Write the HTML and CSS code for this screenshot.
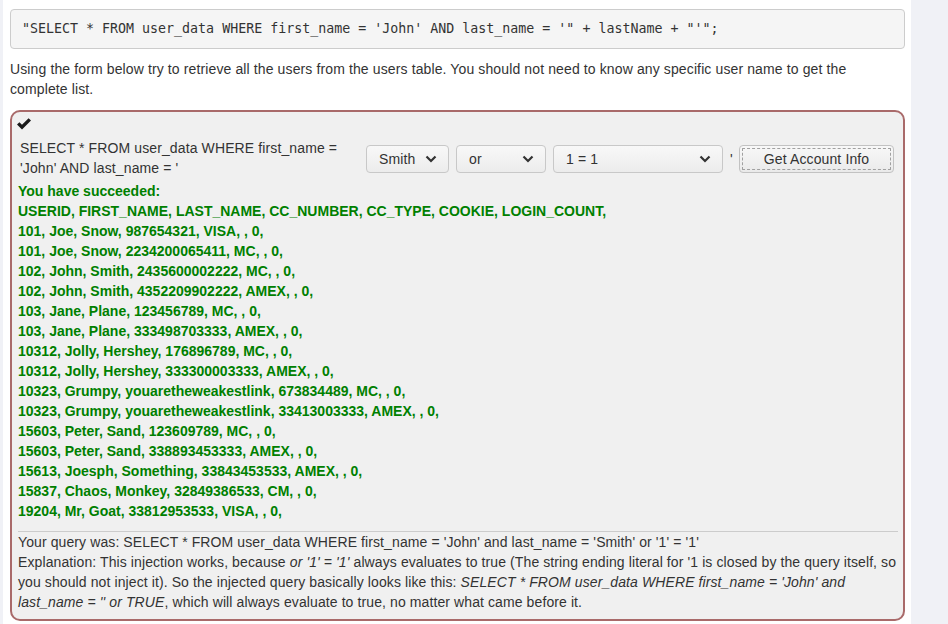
FILE: index.html
```html
<!DOCTYPE html>
<html>
<head>
<meta charset="utf-8">
<link rel="stylesheet" href="styles.css">
</head>
<body>
<div class="main">
  <pre class="code">"SELECT * FROM user_data WHERE first_name = 'John' AND last_name = '" + lastName + "'";</pre>
  <p class="intro">Using the form below try to retrieve all the users from the users table. You should not need to know any specific user name to get the complete list.</p>
  <div class="attack">
    <div class="check-row">
      <svg class="check" width="14" height="12" viewBox="0 0 14 12"><polygon points="0,6.6 2.4,4.2 5,6.8 11.6,0.2 14,2.6 5,11.6" fill="#1a1a1a"/></svg>
    </div>
    <form class="form-row" onsubmit="return false">
      <div class="label">SELECT * FROM user_data WHERE first_name = 'John' AND last_name = '</div>
      <div class="select w-smith"><span>Smith</span><svg class="chev" width="12" height="8" viewBox="0 0 12 8"><polyline points="1.5,1.5 6,6 10.5,1.5" fill="none" stroke="#333" stroke-width="2.2"/></svg></div>
      <div class="select w-or"><span>or</span><svg class="chev" width="12" height="8" viewBox="0 0 12 8"><polyline points="1.5,1.5 6,6 10.5,1.5" fill="none" stroke="#333" stroke-width="2.2"/></svg></div>
      <div class="select w-eq"><span>1 = 1</span><svg class="chev" width="12" height="8" viewBox="0 0 12 8"><polyline points="1.5,1.5 6,6 10.5,1.5" fill="none" stroke="#333" stroke-width="2.2"/></svg></div>
      <span class="quote">'</span>
      <button class="btn" type="button">Get Account Info</button>
    </form>
    <div class="feedback">You have succeeded:<br>USERID, FIRST_NAME, LAST_NAME, CC_NUMBER, CC_TYPE, COOKIE, LOGIN_COUNT, <br>101, Joe, Snow, 987654321, VISA, , 0, <br>101, Joe, Snow, 2234200065411, MC, , 0, <br>102, John, Smith, 2435600002222, MC, , 0, <br>102, John, Smith, 4352209902222, AMEX, , 0, <br>103, Jane, Plane, 123456789, MC, , 0, <br>103, Jane, Plane, 333498703333, AMEX, , 0, <br>10312, Jolly, Hershey, 176896789, MC, , 0, <br>10312, Jolly, Hershey, 333300003333, AMEX, , 0, <br>10323, Grumpy, youaretheweakestlink, 673834489, MC, , 0, <br>10323, Grumpy, youaretheweakestlink, 33413003333, AMEX, , 0, <br>15603, Peter, Sand, 123609789, MC, , 0, <br>15603, Peter, Sand, 338893453333, AMEX, , 0, <br>15613, Joesph, Something, 33843453533, AMEX, , 0, <br>15837, Chaos, Monkey, 32849386533, CM, , 0, <br>19204, Mr, Goat, 33812953533, VISA, , 0, </div>
    <hr class="sep">
    <div class="output">Your query was: SELECT * FROM user_data WHERE first_name = 'John' and last_name = 'Smith' or '1' = '1'<br>Explanation: This injection works, because <i>or '1' = '1'</i> always evaluates to true (The string ending literal for '1 is closed by the query itself, so you should not inject it). So the injected query basically looks like this: <i>SELECT * FROM user_data WHERE first_name = 'John' and last_name = '' or TRUE</i>, which will always evaluate to true, no matter what came before it.</div>
  </div>
</div>
</body>
</html>
```
FILE: styles.css
```css
html, body {
  margin: 0;
  padding: 0;
}
body {
  background: #f0f1f6;
  font-family: "Liberation Sans", Arial, sans-serif;
  font-size: 14px;
  line-height: 20px;
  letter-spacing: 0.12px;
  color: #333;
  height: 624px;
  overflow: hidden;
}
.main {
  background: #fff;
  margin-left: 3px;
  width: 895px;
  padding: 9px 6px 20px 7px;
  min-height: 600px;
}
.code {
  margin: 0 0 10px 0;
  padding: 9.5px 11px;
  background: #f5f5f5;
  border: 1px solid #ccc;
  border-radius: 4px;
  font-family: "DejaVu Sans Mono", "Liberation Mono", monospace;
  font-size: 13.3px;
  line-height: 18.6px;
  letter-spacing: 0;
  color: #333;
  white-space: pre;
}
.intro {
  margin: 0 0 11px 0;
}
.attack {
  border: 2px solid #a96a6a;
  border-radius: 10px;
  background: #f0f0f0;
  padding: 2px 5px 7px 6px;
}
.check-row {
  height: 20px;
  display: flex;
  align-items: flex-start;
}
.check {
  display: block;
  margin-top: 4px;
  margin-left: -1px;
}
.form-row {
  display: flex;
  align-items: center;
  padding: 4px 0 3px 0;
  margin: 0;
}
.label {
  width: 340px;
  padding: 0 2px;
  margin-right: 4px;
  flex: none;
}
.select {
  box-sizing: border-box;
  height: 28px;
  margin-top: 3px;
  border: 1px solid #c8c8c8;
  border-radius: 4px;
  background: linear-gradient(#f8f8f8, #ececec);
  display: flex;
  align-items: center;
  justify-content: space-between;
  padding: 0 11px 0 12px;
  margin-right: 7px;
  flex: none;
  color: #333;
}
.chev {
  display: block;
}
.w-smith { width: 83px; }
.w-or { width: 90px; }
.w-eq { width: 170px; }
.quote {
  margin-top: 3px;
  width: 9px;
  flex: none;
}
.btn {
  box-sizing: border-box;
  width: 155px;
  height: 28px;
  margin-top: 3px;
  border: 1px solid #c2c2c2;
  border-radius: 4px;
  background: linear-gradient(#f8f8f8, #eaeaea);
  font-family: "Liberation Sans", Arial, sans-serif;
  font-size: 14px;
  letter-spacing: 0.12px;
  color: #333;
  outline: 1px dashed #a0a0a0;
  outline-offset: -4px;
  padding: 0;
}
.feedback {
  font-weight: bold;
  letter-spacing: 0;
  color: #008000;
}
.sep {
  border: 0;
  border-top: 1px solid #ccc;
  margin: 10px 0 0 0;
  height: 0;
}
.output {
  color: #333;
  letter-spacing: 0.1px;
}
```
